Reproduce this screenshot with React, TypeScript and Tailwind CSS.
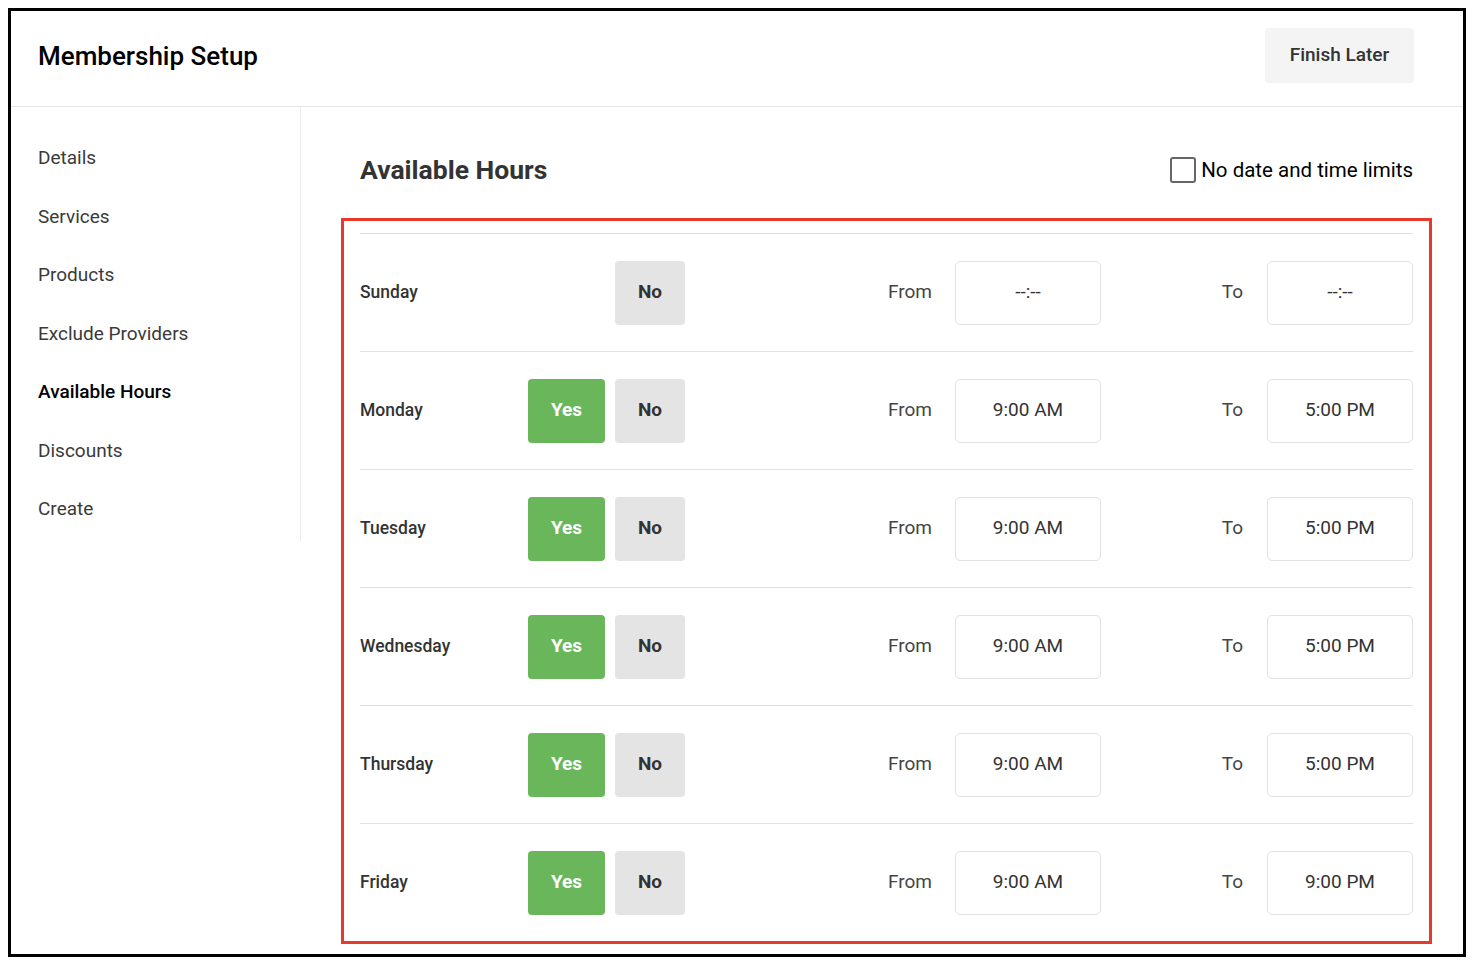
import { useState } from 'react'

const NAV = ['Details', 'Services', 'Products', 'Exclude Providers', 'Available Hours', 'Discounts', 'Create']

interface Day {
  name:  string
  open:  boolean | null   // null = only "No" shown
  from:  string
  to:    string
}

const DAYS: Day[] = [
  { name: 'Sunday',    open: null, from: '--:--',   to: '--:--' },
  { name: 'Monday',    open: true, from: '9:00 AM', to: '5:00 PM' },
  { name: 'Tuesday',   open: true, from: '9:00 AM', to: '5:00 PM' },
  { name: 'Wednesday', open: true, from: '9:00 AM', to: '5:00 PM' },
  { name: 'Thursday',  open: true, from: '9:00 AM', to: '5:00 PM' },
  { name: 'Friday',    open: true, from: '9:00 AM', to: '9:00 PM' },
]

function TimeBox({ value }: { value: string }) {
  return (
    <div className="w-[146px] h-[64px] flex items-center justify-center rounded-[5px] border border-[#e2e2e2] bg-white text-[19px] text-[#333]">
      {value}
    </div>
  )
}

function DayRow({ day }: { day: Day }) {
  return (
    <div className="flex items-center h-[118px] border-t border-[#e0e0e0]">
      <div className="w-[168px] text-[17.5px] font-medium text-[#333]">{day.name}</div>

      {/* Yes / No */}
      <div className="w-[157px] flex justify-end gap-[10px]">
        {day.open !== null && (
          <button className="w-[77px] h-[64px] rounded-[4px] bg-[#6ab75b] text-white text-[19px] font-bold">
            Yes
          </button>
        )}
        <button className="w-[70px] h-[64px] rounded-[4px] bg-[#e4e4e4] text-[#333] text-[19px] font-bold">
          No
        </button>
      </div>

      <div className="w-[270px] flex justify-end pr-[23px] text-[19px] text-[#444]">From</div>
      <TimeBox value={day.from} />
      <div className="w-[166px] flex justify-end pr-[24px] text-[19px] text-[#444]">To</div>
      <TimeBox value={day.to} />
    </div>
  )
}

export default function App() {
  const [noLimits, setNoLimits] = useState(false)

  return (
    <div className="min-h-screen bg-white pt-2 pl-2 font-['Roboto',sans-serif]">
      <div className="w-[1458px] h-[949px] border-[3px] border-black bg-white flex flex-col overflow-hidden">
        {/* Header */}
        <div className="h-[96px] shrink-0 flex items-center justify-between pl-[27px] pr-[49px] border-b border-[#e6e6e6]">
          <h1 className="-mt-[5px] text-[26px] font-medium text-black">Membership Setup</h1>
          <button className="w-[149px] h-[55px] -mt-[6px] rounded-[4px] bg-[#f4f4f4] text-[19px] font-medium text-[#333]">
            Finish Later
          </button>
        </div>

        <div className="flex flex-1">
          {/* Sidebar */}
          <nav className="w-[291px] self-start border-r border-[#ececec] pl-[27px] pt-[22px] pb-[2px]">
            {NAV.map(item => (
              <div
                key={item}
                className={`h-[58.5px] flex items-center text-[19px] ${
                  item === 'Available Hours' ? 'font-medium text-black' : 'text-[#3a3a3a]'
                }`}
              >
                {item}
              </div>
            ))}
          </nav>

          {/* Main */}
          <div className="flex-1 pl-[59px] pr-[50px]">
            <div className="mt-[50px] h-[26px] flex items-center justify-between">
              <h2 className="text-[26.5px] font-bold text-[#333]">Available Hours</h2>
              <label className="flex items-center gap-[5px] cursor-pointer">
                <span
                  onClick={() => setNoLimits(v => !v)}
                  className={`w-[26px] h-[26px] rounded-[3px] border-2 border-[#666] ${noLimits ? 'bg-[#666]' : 'bg-white'}`}
                />
                <span className="text-[20.5px] text-black">No date and time limits</span>
              </label>
            </div>

            <div className="mt-[35px] -ml-[19px] -mr-[19px] border-[3px] border-[#e8392b] pt-[12px] px-[16px]">
              {DAYS.map(d => <DayRow key={d.name} day={d} />)}
            </div>
          </div>
        </div>
      </div>
    </div>
  )
}
